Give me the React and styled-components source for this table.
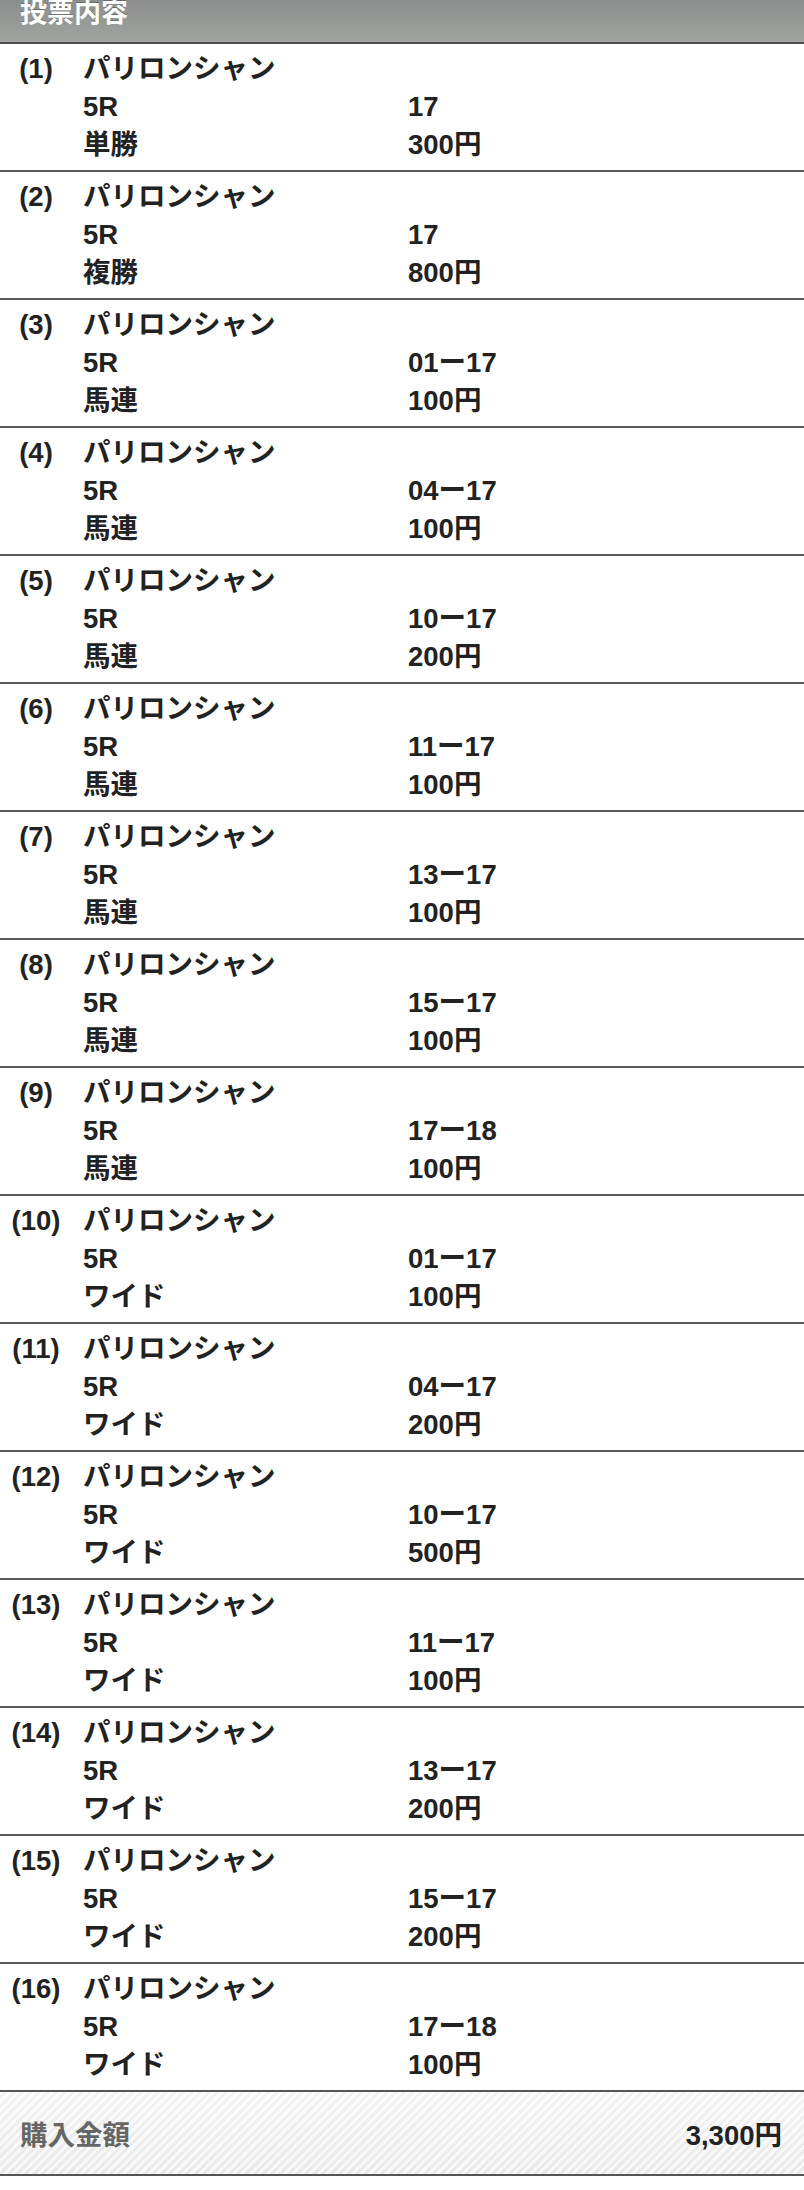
import React from 'react'
import styled, { createGlobalStyle } from 'styled-components'

const GlobalStyle = createGlobalStyle`
  html, body {
    margin: 0;
    padding: 0;
    background: #fff;
  }
  body {
    font-family: "Liberation Sans", "Noto Sans CJK JP", sans-serif;
    color: #222;
  }
`

const Page = styled.div`
  width: 804px;
  font-size: 27.5px;
  font-weight: bold;
`

const Header = styled.div`
  height: 42px;
  overflow: hidden;
  background: linear-gradient(#8a8e8c, #a0a5a2);
  border-bottom: 2px solid #4f4f4f;
  padding: 0 0 0 20px;
  color: #fff;
  font-size: 27px;
  line-height: 27px;
  text-shadow: 0 -1px 0 rgba(0, 0, 0, 0.25);
`

const Entry = styled.div`
  display: grid;
  grid-template-columns: 72px 336px 1fr;
  padding: 6px 0;
  line-height: 38px;
  border-bottom: 2px solid #5a5a5a;
  &:last-child {
    border-bottom: none;
  }
`

const Num = styled.div`
  text-align: center;
`

const Cell = styled.div`
  padding-left: ${(p) => (p.$inset ? '11px' : '0')};
  grid-column: ${(p) => p.$col};
  white-space: nowrap;
`

const Footer = styled.div`
  height: 86px;
  box-sizing: border-box;
  border-top: 2px solid #555;
  border-bottom: 2px solid #555;
  background:
    repeating-linear-gradient(-45deg, rgba(255, 255, 255, 0.7) 0 3px, rgba(255, 255, 255, 0) 3px 6px),
    linear-gradient(#f3f3f3, #e9e9e9);
  display: flex;
  align-items: center;
  justify-content: space-between;
  padding: 0 22px 0 20px;
`

const TotalLabel = styled.span`
  color: #666;
`

const TotalValue = styled.span`
  color: #222;
`

const bets = [
  ['17', '単勝', '300円'],
  ['17', '複勝', '800円'],
  ['01ー17', '馬連', '100円'],
  ['04ー17', '馬連', '100円'],
  ['10ー17', '馬連', '200円'],
  ['11ー17', '馬連', '100円'],
  ['13ー17', '馬連', '100円'],
  ['15ー17', '馬連', '100円'],
  ['17ー18', '馬連', '100円'],
  ['01ー17', 'ワイド', '100円'],
  ['04ー17', 'ワイド', '200円'],
  ['10ー17', 'ワイド', '500円'],
  ['11ー17', 'ワイド', '100円'],
  ['13ー17', 'ワイド', '200円'],
  ['15ー17', 'ワイド', '200円'],
  ['17ー18', 'ワイド', '100円'],
]

const App = () => {
  return (
    <Page>
      <GlobalStyle />
      <Header>投票内容</Header>
      <div>
        {bets.map(([horses, kind, amount], i) => (
          <Entry key={i}>
            <Num>({i + 1})</Num>
            <Cell $inset $col="2 / 4">パリロンシャン</Cell>
            <Cell $inset $col="2">5R</Cell>
            <Cell $col="3">{horses}</Cell>
            <Cell $inset $col="2">{kind}</Cell>
            <Cell $col="3">{amount}</Cell>
          </Entry>
        ))}
      </div>
      <Footer>
        <TotalLabel>購入金額</TotalLabel>
        <TotalValue>3,300円</TotalValue>
      </Footer>
    </Page>
  )
}

export default App
